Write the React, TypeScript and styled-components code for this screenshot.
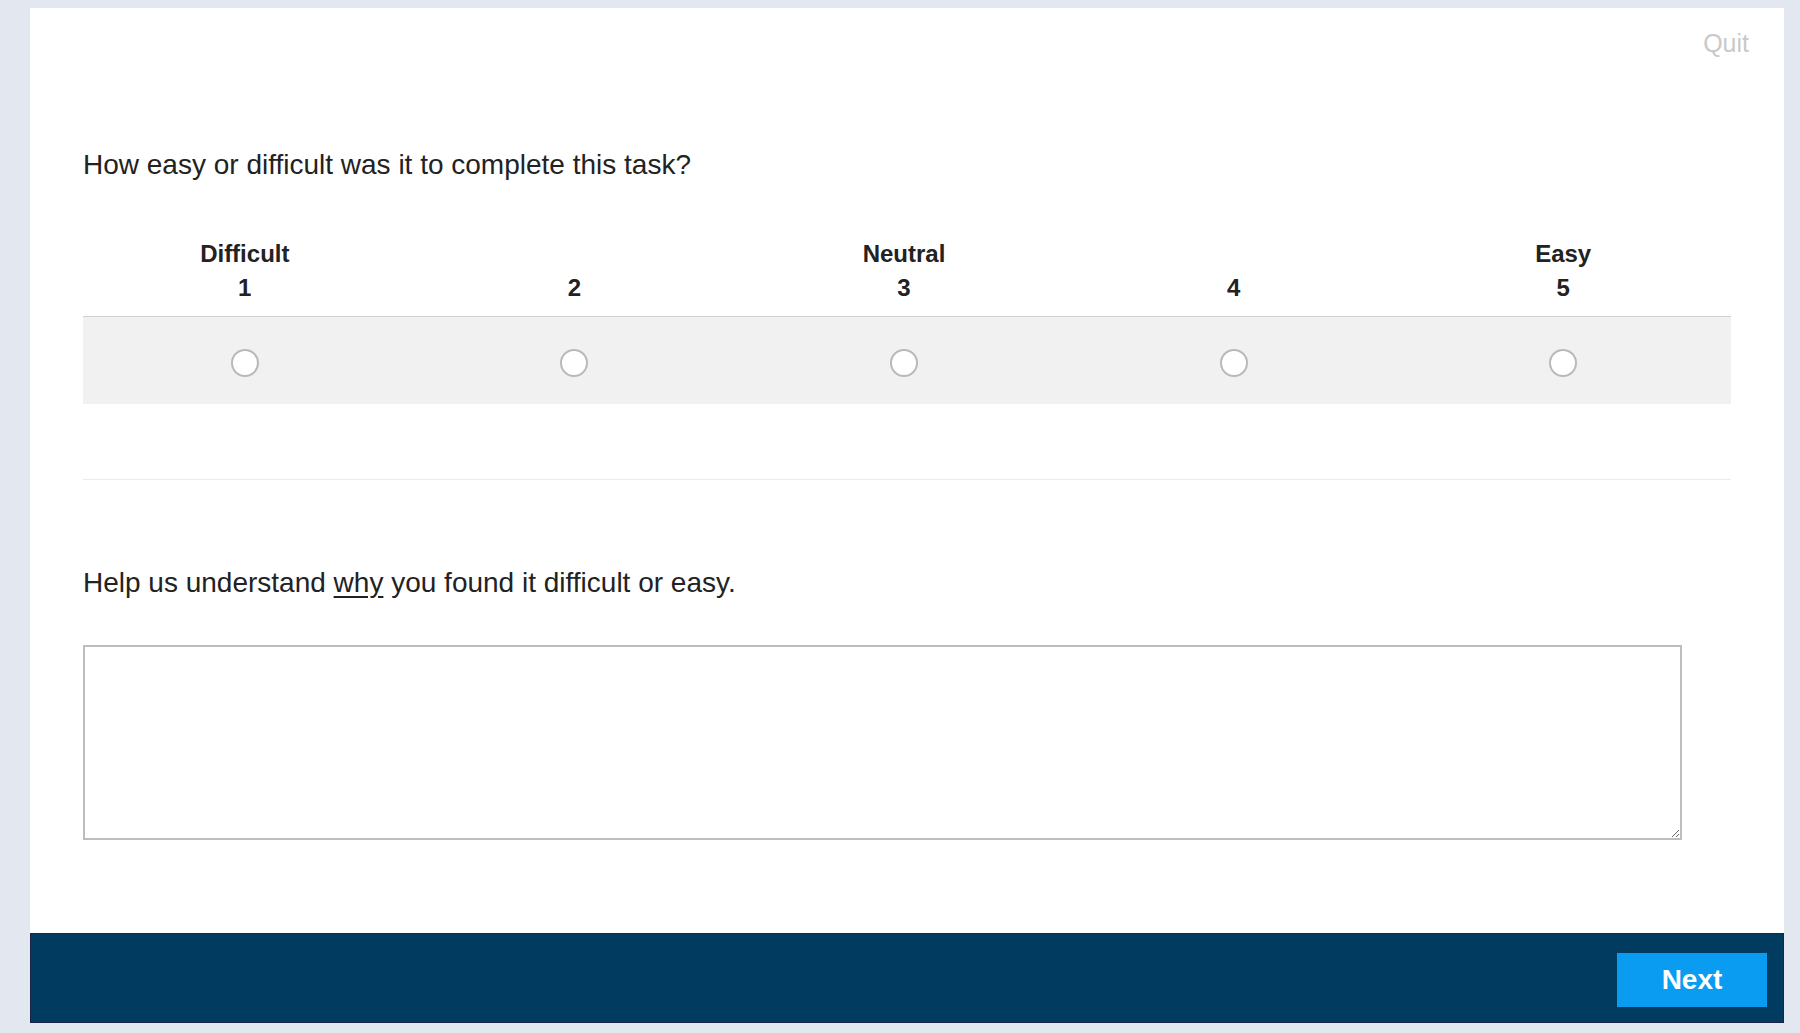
import React from 'react';
import styled, { createGlobalStyle } from 'styled-components';

const GlobalStyle = createGlobalStyle`
  html, body {
    margin: 0;
    padding: 0;
    background: #e2e7f0;
  }
  body {
    font-family: "Liberation Sans", Arial, sans-serif;
    color: #222;
  }
`;

export const Page = styled.div`
  padding: 8px 16px 10px 30px;
`;

export const Card = styled.div`
  background: #fff;
  height: 1015px;
  display: flex;
  flex-direction: column;
`;

export const TopBar = styled.div`
  display: flex;
  justify-content: flex-end;
  padding: 20px 35px 0 0;
  height: 50px;
  box-sizing: border-box;
`;

export const QuitLink = styled.a`
  font-size: 25px;
  line-height: 30px;
  color: #c9c9c9;
  text-decoration: none;
  cursor: pointer;
`;

export const Body = styled.div`
  flex: 1;
  padding: 0 53px;
`;

export const Question = styled.p`
  font-size: 28px;
  line-height: 32px;
  margin: 91px 0 0;
`;

export const Scale = styled.div`
  margin-top: 56px;
`;

export const ScaleHead = styled.div`
  display: grid;
  grid-template-columns: repeat(5, 1fr);
  padding-bottom: 11px;
`;

export const ScaleLabel = styled.div`
  text-align: center;
  font-weight: bold;
  font-size: 24px;
  line-height: 34px;
  padding-right: 6px;
`;

export const ScaleRow = styled.div`
  display: grid;
  grid-template-columns: repeat(5, 1fr);
  background: #f1f1f1;
  border-top: 1px solid #cfcfcf;
  padding: 32px 0 27px;
`;

export const RadioCell = styled.label`
  display: flex;
  justify-content: center;
  padding-right: 6px;
`;

export const Radio = styled.input.attrs({ type: 'radio' })`
  appearance: none;
  margin: 0;
  width: 28px;
  height: 28px;
  border-radius: 50%;
  border: 2px solid #b9b9b9;
  background: #fff;
  box-sizing: border-box;
  cursor: pointer;
  &:checked {
    border: 8px solid #0a9cf0;
  }
`;

export const Divider = styled.hr`
  border: none;
  border-top: 1px solid #ebebeb;
  margin: 75px 0 0;
`;

export const Prompt = styled.p`
  font-size: 28px;
  line-height: 32px;
  margin: 87px 0 0;
  u {
    text-underline-offset: 4px;
  }
`;

export const Answer = styled.textarea`
  display: block;
  box-sizing: border-box;
  width: 1599px;
  height: 195px;
  margin-top: 46px;
  border: 2px solid #bdbdbd;
  border-radius: 0;
  font: inherit;
  font-size: 20px;
  padding: 8px;
  outline: none;
`;

export const Footer = styled.div`
  height: 90px;
  box-sizing: border-box;
  background: #023b60;
  border: 1px solid #1b2448;
  display: flex;
  justify-content: flex-end;
  align-items: center;
  padding-right: 16px;
`;

export const NextButton = styled.button`
  width: 150px;
  height: 54px;
  background: #0a9cf0;
  color: #fff;
  border: none;
  font-family: "Liberation Sans", Arial, sans-serif;
  font-weight: bold;
  font-size: 28px;
  cursor: pointer;
  margin-top: 4px;
`;

const labels = [
  { top: 'Difficult', n: 1 },
  { top: '', n: 2 },
  { top: 'Neutral', n: 3 },
  { top: '', n: 4 },
  { top: 'Easy', n: 5 },
];

export default function App() {
  return (
    <Page>
      <GlobalStyle />
      <Card>
        <TopBar>
          <QuitLink>Quit</QuitLink>
        </TopBar>
        <Body>
          <Question>How easy or difficult was it to complete this task?</Question>
          <Scale>
            <ScaleHead>
              {labels.map(l => (
                <ScaleLabel key={l.n}>
                  {l.top || '\u00a0'}
                  <br />
                  {l.n}
                </ScaleLabel>
              ))}
            </ScaleHead>
            <ScaleRow>
              {labels.map(l => (
                <RadioCell key={l.n}>
                  <Radio name="ease" value={l.n} aria-label={String(l.n)} />
                </RadioCell>
              ))}
            </ScaleRow>
          </Scale>
          <Divider />
          <Prompt>
            Help us understand <u>why</u> you found it difficult or easy.
          </Prompt>
          <Answer />
        </Body>
        <Footer>
          <NextButton>Next</NextButton>
        </Footer>
      </Card>
    </Page>
  );
}
